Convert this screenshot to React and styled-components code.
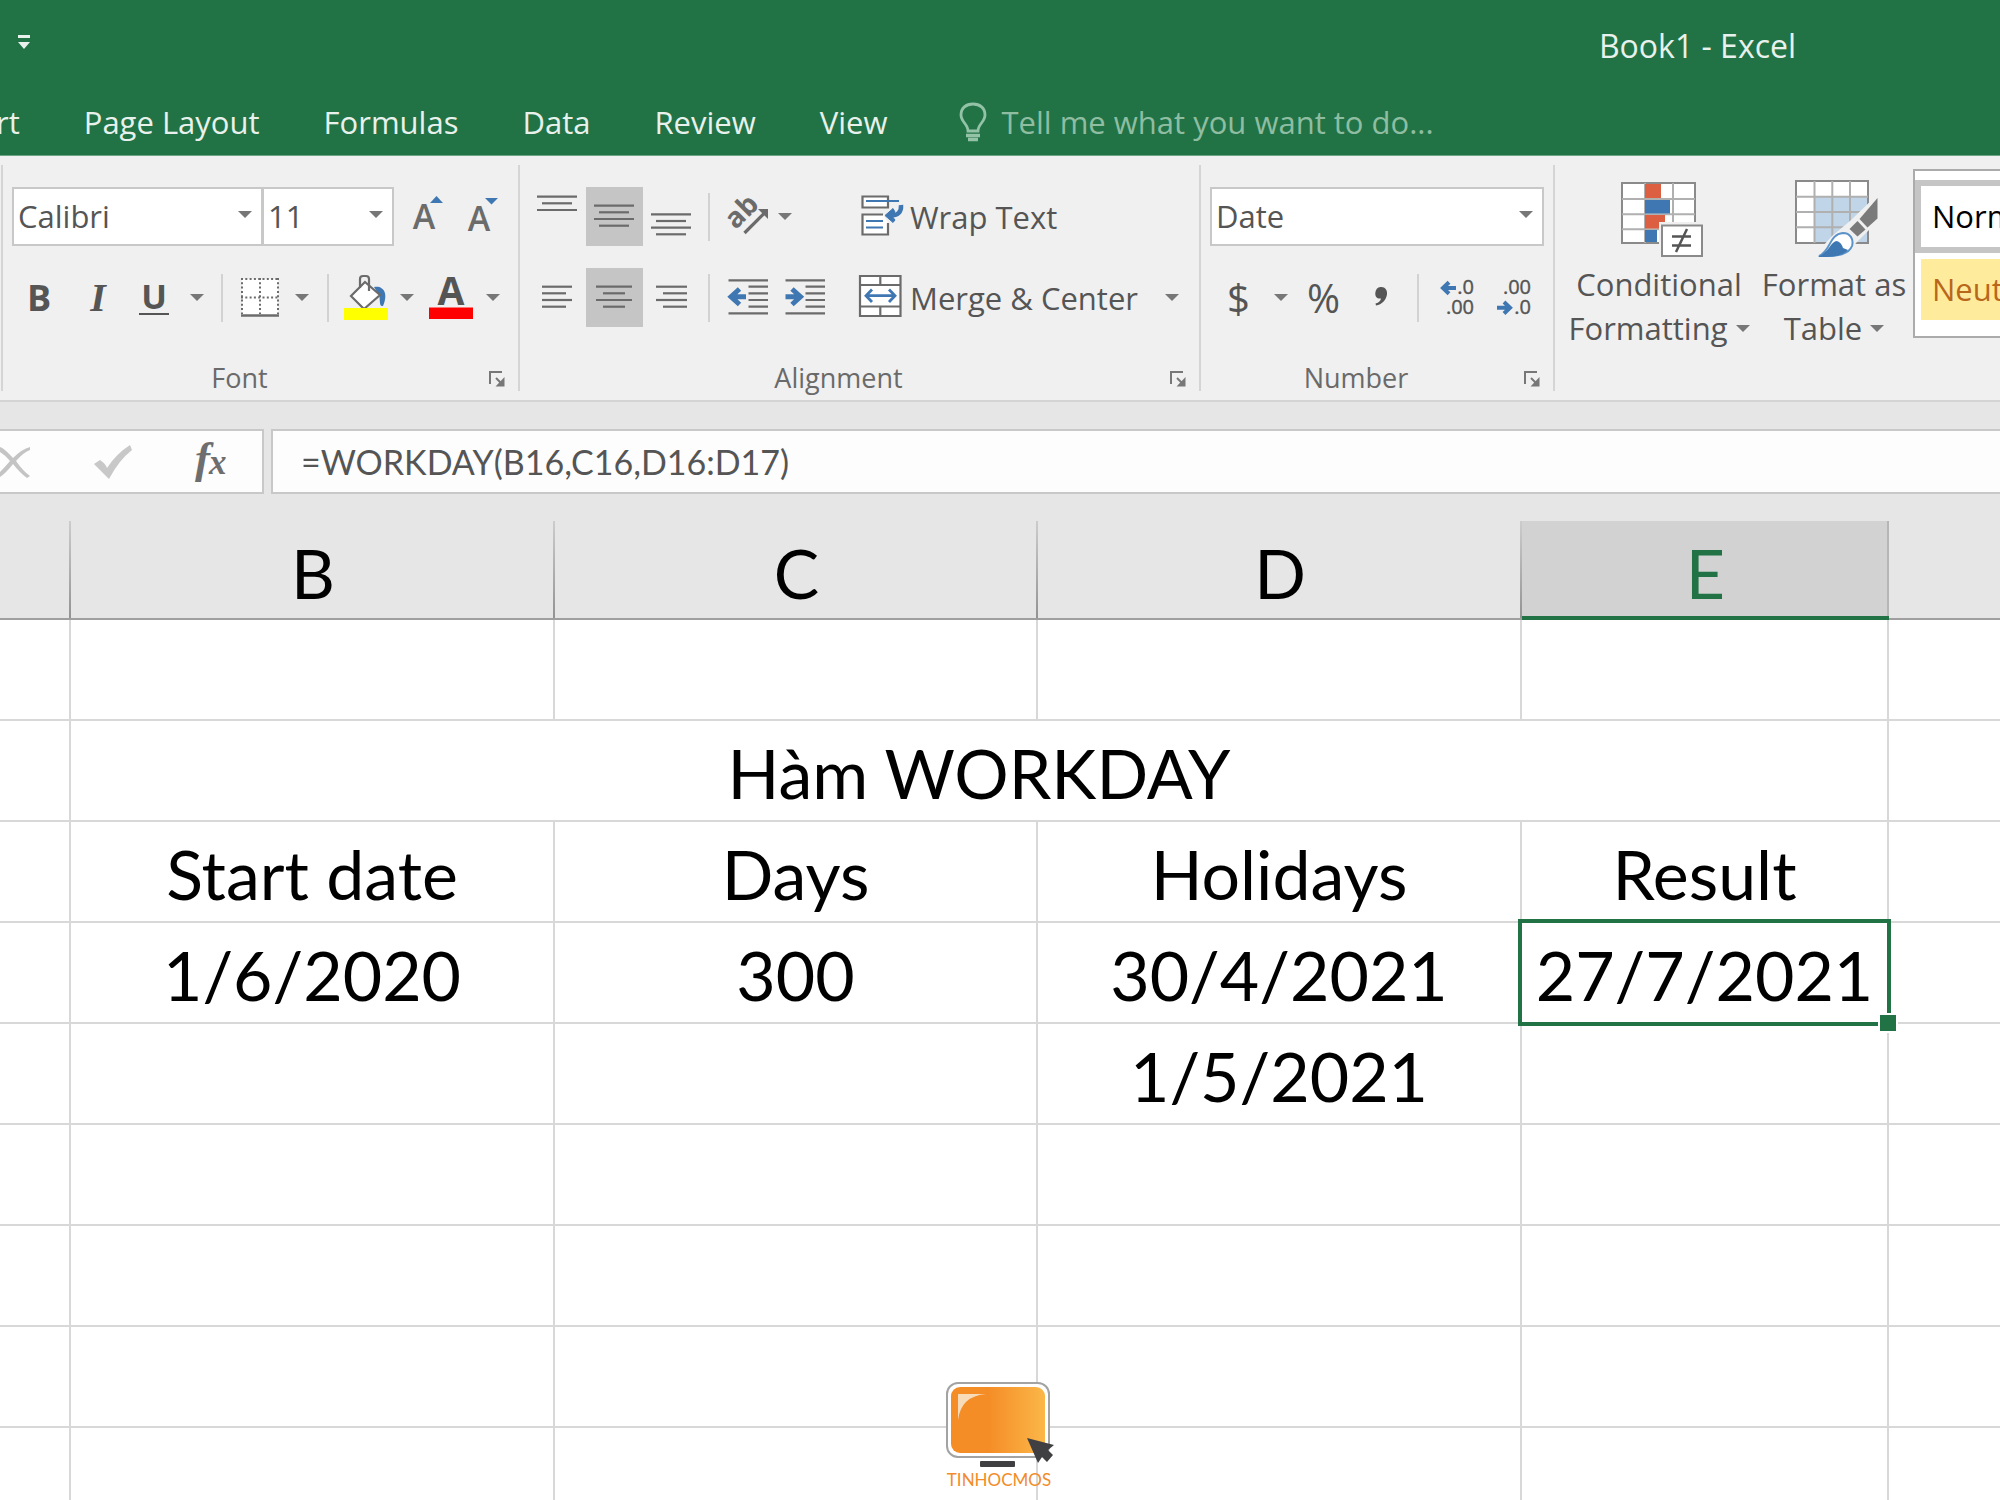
import styled, { createGlobalStyle, css } from "styled-components";

const ui = `"Open Sans", "Noto Sans", sans-serif`;
const cellFont = `Lato, "Open Sans", sans-serif`;
const green = "#217346";
const ink = "#6b6b6b";
const blue = "#3f77b3";

const GlobalStyle = createGlobalStyle`
  * {
    box-sizing: border-box;
  }

  body {
    margin: 0;
    background: #fff;
    font-family: ${ui};
    font-size: 31px;
    color: #555;
  }

  button,
  input,
  select {
    margin: 0;
    padding: 0;
    border: 0;
    border-radius: 0;
    outline: 0;
    background: none;
    font: inherit;
    color: inherit;
  }

  svg {
    display: block;
    flex: none;
    overflow: visible;
  }
`;

const Window = styled.div`
  display: flex;
  flex-direction: column;
  height: 100vh;
  overflow: hidden;
`;

const TitleBar = styled.header`
  display: flex;
  align-items: center;
  height: 90px;
  padding: 0 204px 0 17px;
  background: ${green};
  color: #e8f1ec;
`;

const Title = styled.h1`
  margin: 0 0 0 auto;
  font-size: 32px;
  font-weight: 400;
`;

const QuickAccess = styled.button`
  padding-bottom: 6px;
`;

const TabBar = styled.nav`
  display: flex;
  align-items: center;
  gap: 64px;
  height: 66px;
  padding-bottom: 2px;
  border-bottom: 1px solid #6ba483;
  background: ${green};
  color: #e8f1ec;
`;

const Tab = styled.button`
  white-space: nowrap;

  &:first-child {
    margin-left: -4px;
  }
`;

const TellMe = styled.label`
  display: flex;
  flex: 1;
  align-items: center;
  gap: 14px;
  padding-left: 8px;
  color: #93c2a6;
`;

const TellMeInput = styled.input`
  flex: 1;
  min-width: 0;

  &::placeholder {
    color: #8fbda2;
    opacity: 1;
  }
`;

const Ribbon = styled.section`
  display: flex;
  height: 246px;
  padding: 9px 0 9px 1px;
  border-bottom: 2px solid #d4d4d4;
  background: #f0f0f0;
`;

const Group = styled.div`
  display: flex;
  flex-direction: column;
  justify-content: space-between;
  flex: none;
  width: ${({ $width }) => $width}px;
  padding-top: 22px;
  border-left: 2px solid #d5d5d5;
`;

const GroupBody = styled.div`
  display: flex;
  padding-left: 9px;
`;

const Rows = styled.div`
  display: flex;
  flex-direction: column;
  gap: 22px;
`;

const Row = styled.div`
  display: flex;
  align-items: center;
  height: 59px;
`;

const GroupFooter = styled.div`
  display: grid;
  grid-template-columns: 1fr 42px;
  align-items: center;
  height: 26px;
  font-size: 27px;
  line-height: 26px;
  text-align: center;
  color: #6a6a6a;
`;

const Launcher = styled.button`
  padding: 2px 0 0 13px;
`;

const IconButton = styled.button`
  display: flex;
  align-items: center;
  justify-content: center;
  width: ${({ $width = 57 }) => $width}px;
  height: 59px;
  ${({ $active }) =>
    $active &&
    css`
      background: #c5c5c5;
    `}
`;

const GlyphButton = styled(IconButton)`
  font-family: ${({ $serif }) => ($serif ? `"Liberation Serif", serif` : ui)};
  font-size: ${({ $size = 36 }) => $size}px;
  font-weight: ${({ $bold }) => ($bold ? 700 : 400)};
  font-style: ${({ $serif }) => ($serif ? "italic" : "normal")};
  line-height: 57px;
  color: #555;
`;

const Underlined = styled.span`
  padding: 0 2px;
  border-bottom: 2px solid #555;
  line-height: 33px;
`;

const LabelButton = styled.button`
  display: flex;
  align-items: center;
  gap: 1px;
  height: 59px;
  white-space: nowrap;
`;

const Divider = styled.div`
  width: 2px;
  height: 48px;
  margin: 0 ${({ $after = 8 }) => $after}px 0 ${({ $before = 8 }) => $before}px;
  background: #d2d2d2;
`;

const LongDivider = styled.div`
  width: 2px;
  height: 121px;
  margin: 9px 9px 0 10px;
  background: #e0e0e0;
`;

const ComboBox = styled.div`
  position: relative;
  width: ${({ $width }) => $width}px;
  height: 59px;
  border: 2px solid #c8c8c8;
  background: #fff;

  & + & {
    border-left-width: 1px;
  }

  svg {
    position: absolute;
    top: 22px;
    right: 9px;
    pointer-events: none;
  }
`;

const Select = styled.select`
  width: 100%;
  height: 100%;
  padding: 0 0 2px 4px;
  appearance: none;
`;

const BigButton = styled.button`
  display: flex;
  flex-direction: column;
  align-items: center;
  width: ${({ $width }) => $width}px;
  line-height: 44px;
  white-space: nowrap;
`;

const BigLine = styled.span`
  display: flex;
  align-items: center;
  gap: 8px;
  height: 44px;
`;

const BigIcon = styled.span`
  height: 83px;
`;

const StylesGroup = styled.div`
  display: flex;
  flex: 1;
  min-width: 0;
  padding-left: 6px;
  border-left: 2px solid #d5d5d5;
`;

const StylesButtons = styled.div`
  display: flex;
  flex: none;
  align-items: flex-start;
  padding: 14px 2px 0 0;
`;

const Gallery = styled.div`
  display: flex;
  flex: 1;
  flex-direction: column;
  min-width: 0;
  height: 169px;
  margin-top: 4px;
  padding-top: 9px;
  border: 2px solid #ababab;
  border-right: 0;
  background: #fff;
  overflow: hidden;
`;

const StyleTile = styled.button`
  flex: none;
  width: 240px;
  height: 73px;
  padding: 0 0 2px 11px;
  border: 6px solid ${({ $selected }) => ($selected ? "#c5c5c5" : "#fff")};
  background: ${({ $fill }) => $fill};
  color: ${({ $color }) => $color};
  text-align: left;
`;

const FormulaBar = styled.section`
  display: flex;
  gap: 7px;
  height: 119px;
  padding: 27px 0;
  background: #e6e6e6;
`;

const FormulaTools = styled.div`
  display: flex;
  align-items: center;
  width: 264px;
  border: 2px solid #c8c8c8;
  border-left: 0;
  background: #fdfdfd;
`;

const ToolButton = styled.button`
  display: flex;
  justify-content: ${({ $align = "center" }) => $align};
  width: ${({ $width }) => $width}px;
`;

const FormulaInput = styled.input`
  flex: 1;
  min-width: 0;
  padding-left: 28px;
  border: 2px solid #c8c8c8;
  border-right: 0;
  background: #fdfdfd;
  font-family: ${cellFont};
  font-size: 34px;
`;

const Sheet = styled.main`
  position: relative;
  flex: 1;
  overflow: hidden;
`;

const Grid = styled.table`
  width: 100%;
  table-layout: fixed;
  border-collapse: separate;
  border-spacing: 0;
  font-family: ${cellFont};
  font-size: 68px;
  line-height: 80px;
  color: #000;
`;

const HeadCell = styled.th`
  height: 99px;
  padding: 6px 0 0;
  border-bottom: 2px solid #9f9f9f;
  background:
    linear-gradient(#cccccc, #939393) right / 2px 100% no-repeat,
    #e6e6e6;
  font-weight: 400;

  &:last-child {
    background: #e6e6e6;
  }

  ${({ $selected }) =>
    $selected &&
    css`
      padding-top: 8px;
      border-bottom: 4px solid ${green};
      background:
        linear-gradient(#b6b6b6, #b6b6b6) right / 2px 100% no-repeat,
        #d2d2d2;
      color: ${green};
    `}
`;

const Cell = styled.td`
  position: relative;
  height: 101px;
  padding: 4px 0 0;
  border-right: 2px solid #d8d8d8;
  border-bottom: 2px solid #d8d8d8;
  text-align: center;
  white-space: nowrap;

  &:last-child {
    border-right: 0;
  }
`;

const Selection = styled.div`
  position: absolute;
  inset: -4px;
  z-index: 1;
  border: 4px solid ${green};
  pointer-events: none;

  &::after {
    content: "";
    position: absolute;
    right: -11px;
    bottom: -11px;
    width: 16px;
    height: 16px;
    border: 2px solid #fff;
    background: ${green};
  }
`;

const Watermark = styled.div`
  position: absolute;
  right: 2px;
  bottom: 9px;
  left: 0;
  display: flex;
  flex-direction: column;
  align-items: center;
  font-family: ${cellFont};
  font-size: 17px;
  line-height: 22px;
  color: #f28c28;
`;

const Arrow = () => (
  <svg width="14" height="7" viewBox="0 0 14 7">
    <path d="M0 0H14L7 7Z" fill="#777" />
  </svg>
);

const ButtonIcon = ({ children }) => (
  <svg width="57" height="59" viewBox="0 0 57 59" fill="none" stroke={ink} strokeWidth="2.2">
    {children}
  </svg>
);

const Lines = ({ rows }) => (
  <ButtonIcon>
    {rows.map(([y, x1, x2]) => (
      <path key={y} d={`M${x1} ${y}H${x2}`} />
    ))}
  </ButtonIcon>
);

const LauncherIcon = () => (
  <svg width="16" height="16" viewBox="0 0 16 16" fill="none" stroke="#777" strokeWidth="2">
    <path d="M1 13V1H13" />
    <path d="M7 7L12 12" />
    <path d="M15.500 6V15.500H6.500Z" fill="#777" stroke="none" />
  </svg>
);

const GrowFontIcon = ({ shrink }) => (
  <ButtonIcon>
    <text
      x="20"
      y={shrink ? 44 : 42}
      textAnchor="middle"
      fontFamily="Open Sans, sans-serif"
      fontWeight="600"
      fontSize="34"
      fill={ink}
      stroke="none"
    >
      A
    </text>
    <path d={shrink ? "M26 11H39L32.500 17.500Z" : "M26 16H39L32.500 9Z"} fill={blue} stroke="none" />
  </ButtonIcon>
);

const BordersIcon = () => (
  <svg width="38" height="39" viewBox="0 0 38 39" fill="none" stroke={ink} strokeWidth="2">
    <rect x="1" y="1" width="36" height="36" fill="#fff" stroke="none" />
    <path d="M0 1H38M0 19.500H38M1 0V36M19 0V36M37 0V36" strokeDasharray="2 2.300" />
    <path d="M0 37.500H38" strokeWidth="2.500" />
  </svg>
);

const FillIcon = () => (
  <svg width="46" height="46" viewBox="0 0 46 46">
    <path d="M31 12C40 10 46 18 40 31C37 31 37 30 36.500 21Z" fill={blue} />
    <path d="M22 7L37 20L21 34L8 21Z" fill="#fff" stroke={ink} strokeWidth="2.200" />
    <path d="M17 13V4Q17 1 20 1H23Q26 1 26 4V16" fill="none" stroke={ink} strokeWidth="2.200" />
    <path d="M1 33H45V45H1Z" fill="#ffff00" />
  </svg>
);

const FontColorIcon = () => (
  <ButtonIcon>
    <text
      x="28"
      y="37"
      textAnchor="middle"
      fontFamily="Open Sans, sans-serif"
      fontWeight="700"
      fontSize="39"
      fill="#555"
      stroke="none"
    >
      A
    </text>
    <path d="M6 39.500H50V51H6Z" fill="#ff0000" stroke="none" />
  </ButtonIcon>
);

const OrientationIcon = () => (
  <ButtonIcon>
    <text
      x="29"
      y="31"
      transform="rotate(-45 29 31)"
      textAnchor="middle"
      fontFamily="Open Sans, sans-serif"
      fontWeight="700"
      fontSize="28"
      fill={ink}
      stroke="none"
    >
      ab
    </text>
    <path d="M25.500 46L47 24.500" strokeWidth="3.200" />
    <path d="M39 22H49V32L46 29L42 25Z" fill={ink} stroke="none" />
  </ButtonIcon>
);

const IndentIcon = ({ increase }) => (
  <ButtonIcon>
    <path d="M9.500 12.300H49M29.500 18.700H49M29.500 25.300H49M29.500 32H49M29.500 38.700H49M9.500 45.300H49" />
    <path
      d={increase ? "M9.500 28.700H25M16 21L24.500 28.700L16 36.500" : "M27 28.700H12M20.500 21L12 28.700L20.500 36.500"}
      stroke={blue}
      strokeWidth="5"
    />
  </ButtonIcon>
);

const WrapIcon = () => (
  <ButtonIcon>
    <path d="M10.500 9.500H36V20.500H10.500Z" fill="#fff" />
    <path d="M31 27.500H10.500V47.500H36V36" fill="#fff" />
    <path d="M14 14H47M14 34H31M14 40.500H31" stroke={blue} />
    <path d="M49 18Q50 28.500 38 28.500" stroke={blue} strokeWidth="4.500" />
    <path d="M33 28.500L41 21.500L43 25L39.500 28.500L43 33L41 35.500Z" fill={blue} stroke={blue} strokeWidth="1" />
  </ButtonIcon>
);

const MergeIcon = () => (
  <ButtonIcon>
    <path d="M8 8H48.500V48H8Z" fill="#fff" />
    <path d="M8 17H48.500M8 38.500H48.500M28.300 8V17M28.300 38.500V48" />
    <path d="M14 27.700H43M20 21.500L14 27.700L20 34M37 21.500L43 27.700L37 34" stroke={blue} strokeWidth="2.800" />
  </ButtonIcon>
);

const CommaIcon = () => (
  <ButtonIcon>
    <path
      d="M28.500 19C33 18.500 35.500 22 35 26.500C34 32 30 36.500 24 37.500L23.500 35.500C27 34.500 28.500 33 29 30.500C25 31 23 28.500 23.300 25C23.500 21.500 25.500 19.300 28.500 19Z"
      fill="#555"
      stroke="none"
    />
  </ButtonIcon>
);

const DecimalIcon = ({ decrease }) => (
  <ButtonIcon>
    <g fontFamily="Open Sans, sans-serif" fontSize="20" textAnchor="end" fill="#555" stroke="#555" strokeWidth="0.400">
      <text x="46" y="26">{decrease ? ".00" : ".0"}</text>
      <text x="46" y="46">{decrease ? ".0" : ".00"}</text>
    </g>
    <path
      d={decrease ? "M12 39.700H25M19 34L25 39.700L19 45.500" : "M28 20H15M21 14.300L15 20L21 25.700"}
      stroke={blue}
      strokeWidth="4"
    />
  </ButtonIcon>
);

const ConditionalIcon = () => (
  <svg width="92" height="80" viewBox="0 0 92 80" fill="none" stroke="#8a8a8a" strokeWidth="2">
    <path d="M9 4H82V64H9Z" fill="#fff" />
    <path d="M9 20H82M9 35.300H82M9 50.300H82M32 4V64M60 4V64" stroke="#b0b0b0" />
    <g stroke="none">
      <path d="M32 5H48V19H32ZM32 36H52V49.500H32Z" fill="#dd5f41" />
      <path d="M32 21H57V34.500H32ZM32 51H44V63H32Z" fill={blue} />
      <path d="M46 43H92V80H46Z" fill="#f0f0f0" />
    </g>
    <path d="M49 46.500H89V77H49Z" fill="#fff" />
    <path d="M59 57.500H78M59 66.500H78M74 50L63 73" stroke="#555" strokeWidth="2.500" />
  </svg>
);

const FormatTableIcon = () => (
  <svg width="92" height="80" viewBox="0 0 92 80" fill="none" stroke="#8a8a8a" strokeWidth="2">
    <path d="M8 2H80V64H8Z" fill="#fff" />
    <path d="M27 18H79V63H27Z" fill="#c0d5e8" stroke="none" />
    <path d="M8 17.700H80M8 33H80M8 48.300H80M26.500 2V64M44.300 2V64M62 2V64" stroke="#b0b0b0" />
    <path d="M91 14V41L68 64L59 79H24L44 57L62 42Z" fill="#f0f0f0" stroke="none" />
    <path d="M89.500 19V39.500L79.500 48.500L71.500 40Z" fill="#7a7a7a" stroke="none" />
    <path d="M69.500 42L77.500 50.500L69.500 57.500L61.500 50Z" fill="#7a7a7a" stroke="none" />
    <path
      d="M31 77C43 72 41 55 55 54C62 54 66 60 64 67C61 75 51 77.500 31 77Z"
      fill="#fff"
      stroke="#5b93c9"
    />
    <path d="M30 78C42 72 41 65 48 62C51 62 54 65 55 69L60 71C54 77 47 78 30 78Z" fill={blue} stroke="none" />
  </svg>
);

const BulbIcon = () => (
  <svg width="28" height="40" viewBox="0 0 28 40" fill="none" stroke="#93c2a6" strokeWidth="2.800">
    <path d="M9 29C9 22 2 20 2 13C2 6 7 2 14 2C21 2 26 6 26 13C26 20 19 22 19 29Z" />
    <path d="M7 33.500H21M9 37.500H19" strokeWidth="3.500" />
  </svg>
);

const QuickAccessIcon = () => (
  <svg width="14" height="14" viewBox="0 0 14 14" fill="#e8f1ec">
    <path d="M1 0H13V3H1ZM1 7H13L7 14Z" />
  </svg>
);

const CancelIcon = () => (
  <svg width="31" height="32" viewBox="0 0 31 32" fill="#c4c4c4">
    <path d="M0 1Q4 2 13 12Q22 3 30 1L30 4Q24 6 16 15Q23 25 30 30L27 32Q20 27 13 18Q6 27 0 31L0 26Q5 21 10 15Q5 9 0 6Z" />
  </svg>
);

const EnterIcon = () => (
  <svg width="38" height="34" viewBox="0 0 38 34">
    <path d="M0 19L6 15Q11 18 13 23Q22 9 36 0L38 5Q25 15 15 34Z" fill="#c8c8c8" />
  </svg>
);

const FunctionIcon = () => (
  <svg width="42" height="60" viewBox="0 0 42 60">
    <g fontFamily="Liberation Serif, serif" fontStyle="italic" fontWeight="700" fill="#6e6e6e">
      <text x="6" y="41" fontSize="45">f</text>
      <text x="20" y="42" fontSize="35">x</text>
    </g>
  </svg>
);

const LogoIcon = () => (
  <svg width="110" height="88" viewBox="0 0 110 88">
    <defs>
      <linearGradient id="screen">
        <stop offset="0.400" stopColor="#f58d27" />
        <stop offset="1" stopColor="#fbb748" />
      </linearGradient>
    </defs>
    <rect x="3" y="2" width="102" height="74" rx="11" fill="#fff" stroke="#a3a3a3" strokeWidth="2" />
    <rect x="7" y="6" width="94" height="66" rx="9" fill="url(#screen)" />
    <path d="M14 13H42Q17 15 14 39Z" fill="#f8dcba" />
    <rect x="36" y="80" width="35" height="6" rx="1" fill="#404042" />
    <path d="M83 57L110 64L104 69L109 74L103 81L98 76L94 82Z" fill="#404042" />
  </svg>
);

const Combo = ({ label, value, width }) => (
  <ComboBox $width={width}>
    <Select aria-label={label} defaultValue={value}>
      <option>{value}</option>
    </Select>
    <Arrow />
  </ComboBox>
);

const DropButton = ({ label, width }) => (
  <IconButton $width={width} aria-label={label}>
    <Arrow />
  </IconButton>
);

const Footer = ({ children }) => (
  <GroupFooter>
    <span>{children}</span>
    <Launcher aria-label={`${children} settings`}>
      <LauncherIcon />
    </Launcher>
  </GroupFooter>
);

const FontGroup = () => (
  <Group $width={517}>
    <GroupBody>
      <Rows>
        <Row>
          <Combo label="Font" value="Calibri" width={251} />
          <Combo label="Font size" value="11" width={131} />
          <IconButton aria-label="Increase font size" $width={76}>
            <GrowFontIcon />
          </IconButton>
          <IconButton aria-label="Decrease font size" $width={35}>
            <GrowFontIcon shrink />
          </IconButton>
        </Row>
        <Row>
          <GlyphButton $width={54} $bold aria-label="Bold">B</GlyphButton>
          <GlyphButton $width={64} $bold $serif $size={40} aria-label="Italic">I</GlyphButton>
          <GlyphButton $width={48} $bold $size={34} aria-label="Underline">
            <Underlined>U</Underlined>
          </GlyphButton>
          <DropButton label="Underline options" width={37} />
          <Divider $before={6} />
          <IconButton aria-label="Borders">
            <BordersIcon />
          </IconButton>
          <DropButton label="Border options" width={28} />
          <Divider $before={11} $after={6} />
          <IconButton $width={62} aria-label="Fill color">
            <FillIcon />
          </IconButton>
          <DropButton label="Fill color options" width={20} />
          <IconButton $width={69} aria-label="Font color">
            <FontColorIcon />
          </IconButton>
          <DropButton label="Font color options" width={14} />
        </Row>
      </Rows>
    </GroupBody>
    <Footer>Font</Footer>
  </Group>
);

const AlignmentGroup = () => (
  <Group $width={681}>
    <GroupBody>
      <Rows>
        <Row>
          <IconButton aria-label="Top align">
            <Lines rows={[[9.7, 8, 48], [16.3, 13, 43], [23, 8, 48]]} />
          </IconButton>
          <IconButton $active aria-label="Middle align">
            <Lines rows={[[18.7, 8, 48], [25.3, 13, 43], [32, 8, 48], [38.7, 13, 43]]} />
          </IconButton>
          <IconButton aria-label="Bottom align">
            <Lines rows={[[27.3, 8, 48], [34, 13, 43], [40.7, 8, 48], [47.3, 13, 43]]} />
          </IconButton>
          <Divider $after={9} />
          <IconButton aria-label="Orientation">
            <OrientationIcon />
          </IconButton>
          <DropButton label="Orientation options" width={18} />
        </Row>
        <Row>
          <IconButton aria-label="Align left">
            <Lines rows={[[18.7, 13, 43], [25.3, 13, 37], [32, 13, 43], [38.7, 13, 37]]} />
          </IconButton>
          <IconButton $active aria-label="Center">
            <Lines rows={[[18.7, 10, 46], [25.3, 17, 39], [32, 10, 46], [38.7, 17, 39]]} />
          </IconButton>
          <IconButton aria-label="Align right">
            <Lines rows={[[18.7, 13, 44], [25.3, 20, 44], [32, 13, 44], [38.7, 20, 44]]} />
          </IconButton>
          <Divider $after={9} />
          <IconButton aria-label="Decrease indent">
            <IndentIcon />
          </IconButton>
          <IconButton aria-label="Increase indent">
            <IndentIcon increase />
          </IconButton>
        </Row>
      </Rows>
      <LongDivider />
      <Rows>
        <LabelButton>
          <WrapIcon />
          Wrap Text
        </LabelButton>
        <Row>
          <LabelButton>
            <MergeIcon />
            Merge &amp; Center
          </LabelButton>
          <DropButton label="Merge options" width={68} />
        </Row>
      </Rows>
    </GroupBody>
    <Footer>Alignment</Footer>
  </Group>
);

const NumberGroup = () => (
  <Group $width={354}>
    <GroupBody>
      <Rows>
        <Row>
          <Combo label="Number format" value="Date" width={334} />
        </Row>
        <Row>
          <GlyphButton $size={40}>$</GlyphButton>
          <DropButton label="Currency options" width={28} />
          <GlyphButton $size={40}>%</GlyphButton>
          <IconButton aria-label="Comma style">
            <CommaIcon />
          </IconButton>
          <Divider $after={9} />
          <IconButton aria-label="Increase decimal">
            <DecimalIcon />
          </IconButton>
          <IconButton aria-label="Decrease decimal">
            <DecimalIcon decrease />
          </IconButton>
        </Row>
      </Rows>
    </GroupBody>
    <Footer>Number</Footer>
  </Group>
);

const columns = [
  { name: "", width: 71 },
  { name: "B", width: 484 },
  { name: "C", width: 483 },
  { name: "D", width: 484 },
  { name: "E", width: 367, selected: true },
  { name: "" },
];

const rows = [
  ["", "", "", "", "", ""],
  ["", { text: "Hàm WORKDAY", span: 4 }, ""],
  ["", "Start date", "Days", "Holidays", "Result", ""],
  ["", "1/6/2020", "300", "30/4/2021", { text: "27/7/2021", selected: true }, ""],
  ["", "", "", "1/5/2021", "", ""],
  ["", "", "", "", "", ""],
  ["", "", "", "", "", ""],
  ["", "", "", "", "", ""],
  ["", "", "", "", "", ""],
];

const tabs = ["rt", "Page Layout", "Formulas", "Data", "Review", "View"];

export default function App() {
  return (
    <Window>
      <GlobalStyle />
      <TitleBar>
        <QuickAccess aria-label="Customize Quick Access Toolbar">
          <QuickAccessIcon />
        </QuickAccess>
        <Title>Book1 - Excel</Title>
      </TitleBar>
      <TabBar>
        {tabs.map((tab) => (
          <Tab key={tab}>{tab}</Tab>
        ))}
        <TellMe>
          <BulbIcon />
          <TellMeInput placeholder="Tell me what you want to do..." aria-label="Tell me what you want to do" />
        </TellMe>
      </TabBar>
      <Ribbon>
        <FontGroup />
        <AlignmentGroup />
        <NumberGroup />
        <StylesGroup>
          <StylesButtons>
            <BigButton $width={196}>
              <BigIcon>
                <ConditionalIcon />
              </BigIcon>
              <BigLine>Conditional</BigLine>
              <BigLine>
                Formatting <Arrow />
              </BigLine>
            </BigButton>
            <BigButton $width={154}>
              <BigIcon>
                <FormatTableIcon />
              </BigIcon>
              <BigLine>Format as</BigLine>
              <BigLine>
                Table <Arrow />
              </BigLine>
            </BigButton>
          </StylesButtons>
          <Gallery>
            <StyleTile $selected $fill="#fff" $color="#000">
              Normal
            </StyleTile>
            <StyleTile $fill="#ffeb9c" $color="#b8671b">
              Neutral
            </StyleTile>
          </Gallery>
        </StylesGroup>
      </Ribbon>
      <FormulaBar>
        <FormulaTools>
          <ToolButton $width={62} $align="flex-start" aria-label="Cancel">
            <CancelIcon />
          </ToolButton>
          <ToolButton $width={102} aria-label="Enter">
            <EnterIcon />
          </ToolButton>
          <ToolButton $width={92} aria-label="Insert function">
            <FunctionIcon />
          </ToolButton>
        </FormulaTools>
        <FormulaInput aria-label="Formula" defaultValue="=WORKDAY(B16,C16,D16:D17)" />
      </FormulaBar>
      <Sheet>
        <Grid>
          <colgroup>
            {columns.map(({ width }, i) => (
              <col key={i} width={width} />
            ))}
          </colgroup>
          <thead>
            <tr>
              {columns.map(({ name, selected }, i) => (
                <HeadCell key={i} $selected={selected}>
                  {name}
                </HeadCell>
              ))}
            </tr>
          </thead>
          <tbody>
            {rows.map((cells, r) => (
              <tr key={r}>
                {cells.map((cell, c) => (
                  <Cell key={c} colSpan={cell.span}>
                    {cell.text ?? cell}
                    {cell.selected && <Selection />}
                  </Cell>
                ))}
              </tr>
            ))}
          </tbody>
        </Grid>
        <Watermark>
          <LogoIcon />
          TINHOCMOS
        </Watermark>
      </Sheet>
    </Window>
  );
}
